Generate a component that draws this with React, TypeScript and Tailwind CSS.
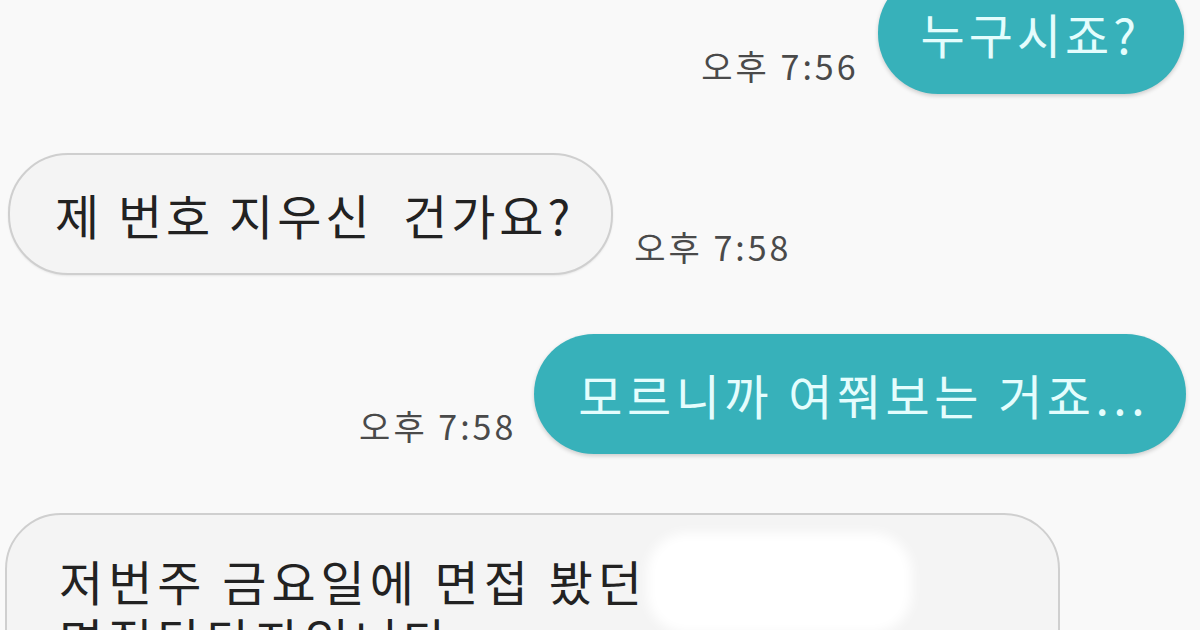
import React from "react";

const font = { fontFamily: '"Noto Sans CJK KR", "Noto Sans", sans-serif' };

function Time({ t }: { t: string }) {
  return (
    <span className="text-[34px] leading-[40px] tracking-[3px] text-[#4a4a4a] mb-[8px] whitespace-nowrap">
      {t}
    </span>
  );
}

export default function App() {
  return (
    <div
      className="w-[1200px] h-[630px] overflow-hidden bg-[#f9f9f9]"
      style={font}
    >
      <div className="flex flex-col gap-[59px] mt-[-28px]">
        <div className="flex items-end justify-end gap-[19px] pr-[16px]">
          <Time t="오후 7:56" />
          <div className="rounded-[60px] bg-[#37b1ba] shadow-[0_2px_4px_rgba(0,0,0,0.18)] pl-[43px] pr-[44px] py-[32px] text-[48px] leading-[58px] tracking-[4px] text-[#e4fdfd] whitespace-nowrap">
            누구시죠?
          </div>
        </div>

        <div className="flex items-end justify-start gap-[21px] pl-[8px]">
          <div className="rounded-[60px] bg-[#f4f4f4] border-2 border-[#cfcfcf] shadow-[0_1px_2px_rgba(0,0,0,0.08)] pl-[45px] pr-[37px] py-[30px] text-[48px] leading-[58px] tracking-[4px] text-[#222] whitespace-pre">
            제 번호 지우신  건가요?
          </div>
          <Time t="오후 7:58" />
        </div>

        <div className="flex items-end justify-end gap-[18px] pr-[14px]">
          <Time t="오후 7:58" />
          <div className="rounded-[60px] bg-[#37b1ba] shadow-[0_2px_4px_rgba(0,0,0,0.18)] pl-[44px] pr-[37px] py-[31px] text-[48px] leading-[58px] tracking-[4.5px] text-[#e4fdfd] whitespace-nowrap">
            모르니까 여쭤보는 거죠...
          </div>
        </div>

        <div className="flex justify-start pl-[5px]">
          <div className="relative w-[1055px] rounded-[56px] bg-[#f4f4f4] border-2 border-[#cfcfcf] pl-[52px] pr-[37px] pt-[36px] pb-[30px] text-[48px] leading-[58px] tracking-[5px] text-[#222]">
            <div className="whitespace-nowrap">저번주 금요일에 면접 봤던</div>
            <div className="whitespace-nowrap">면접담당자입니다.</div>
            <div className="absolute left-[640px] top-[18px] w-[265px] h-[100px] rounded-[40px] bg-white blur-[6px]" />
          </div>
        </div>
      </div>
    </div>
  );
}
